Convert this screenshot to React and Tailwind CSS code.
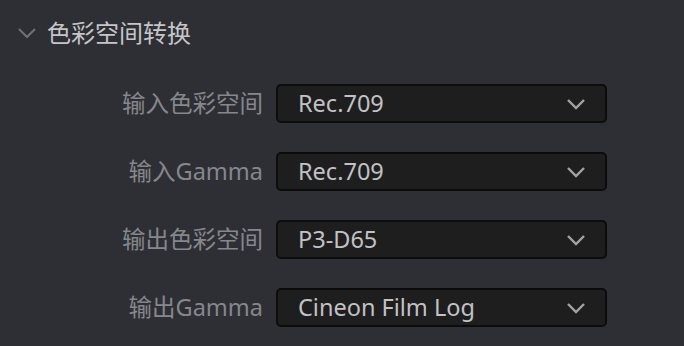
export default function App() {
  const rows = [
    ["输入色彩空间", "Rec.709"],
    ["输入Gamma", "Rec.709"],
    ["输出色彩空间", "P3-D65"],
    ["输出Gamma", "Cineon Film Log"],
  ];
  const font = { fontFamily: '"Noto Sans", "Noto Sans CJK SC", sans-serif' };
  return (
    <div className="w-[684px] h-[346px] bg-[#2e2f35] overflow-hidden" style={font}>
      <div className="flex items-center h-[34px] mt-[16px] pl-[17px]">
        <svg width="20" height="12" viewBox="0 0 20 12" className="shrink-0">
          <path d="M2 2 L10 10 L18 2" fill="none" stroke="#707177" strokeWidth="2" />
        </svg>
        <span className="ml-[10px] text-[24px] leading-none text-[#c6c6c8]">色彩空间转换</span>
      </div>
      <div className="flex flex-col gap-[29px] mt-[34px]">
        {rows.map(([label, value]) => (
          <div key={label} className="flex items-center h-[39px]">
            <div className="w-[264px] text-right pr-[1px] text-[23.5px] leading-none text-[#86878b]">{label}</div>
            <div className="ml-[12px] w-[331px] h-[39px] rounded-[5px] border-2 border-[#0c0c0d] bg-[#1e1e1f] flex items-center pl-[20px] pr-[19px]">
              <span className="flex-1 text-[23.5px] leading-none text-[#c2c2c4]">{value}</span>
              <svg width="20" height="14" viewBox="0 0 20 14">
                <path d="M2 3 L10 11 L18 3" fill="none" stroke="#a3a3a6" strokeWidth="2.4" />
              </svg>
            </div>
          </div>
        ))}
      </div>
    </div>
  );
}
